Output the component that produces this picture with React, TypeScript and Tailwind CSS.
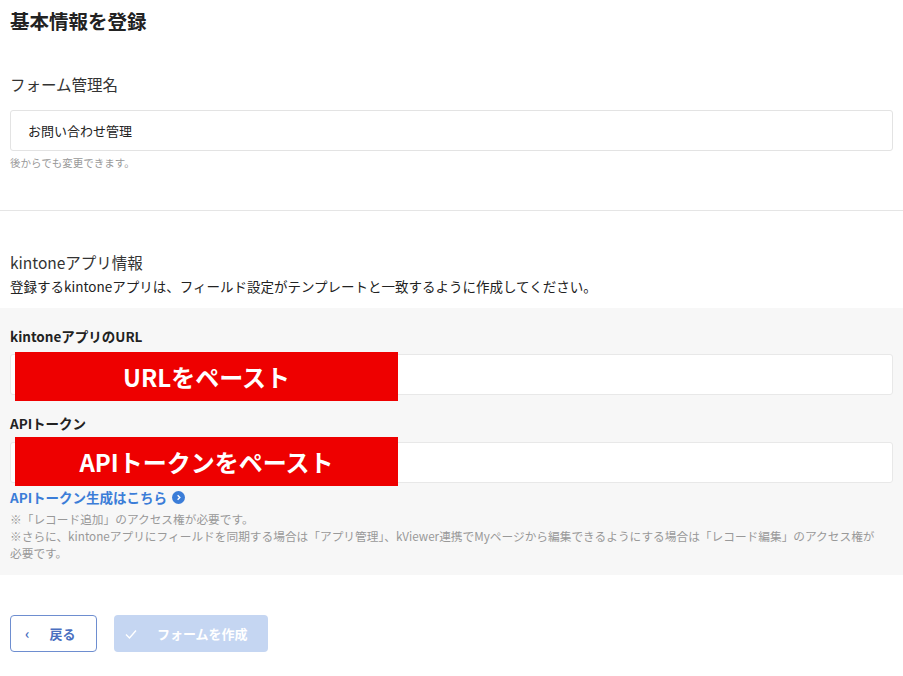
export default function App() {
  const f = { fontFamily: '"Noto Sans CJK JP", "Noto Sans", sans-serif' };
  return (
    <div style={f} className="w-[903px] h-[676px] bg-white text-[#333] overflow-hidden">
      <div className="px-[10px] pt-[7px]">
        <h1 className="text-[19.5px] font-bold leading-[28px] text-[#222]">基本情報を登録</h1>
        <div className="mt-[38px] text-[15.5px] leading-[22px]">フォーム管理名</div>
        <div className="mt-[15px] h-[41px] border border-[#e3e3e3] rounded-[3px] flex items-center px-[17px] text-[13px] text-[#222]">お問い合わせ管理</div>
        <div className="mt-[4px] text-[10.5px] text-[#999] leading-[16px]">後からでも変更できます。</div>
      </div>
      <div className="mt-[39px] border-t border-[#e5e5e5]" />
      <div className="px-[10px] pt-[40px]">
        <div className="text-[15.5px] leading-[22px]">kintoneアプリ情報</div>
        <div className="mt-[3px] text-[13.5px] leading-[20px] text-[#222]">登録するkintoneアプリは、フィールド設定がテンプレートと一致するように作成してください。</div>
      </div>
      <div className="mt-[12px] bg-[#f7f7f7] px-[10px] pt-[18px] pb-[14px]">
        <div className="text-[13.5px] font-bold leading-[20px] text-[#222]">kintoneアプリのURL</div>
        <div className="relative mt-[8px] h-[41px] bg-white border border-[#e8e8e8] rounded-[3px]">
          <div className="absolute left-[4px] top-[-3px] w-[383px] h-[49px] bg-[#ee0000] flex items-center justify-center text-white text-[24px] font-bold">URLをペースト</div>
        </div>
        <div className="mt-[18px] text-[13.5px] font-bold leading-[20px] text-[#222]">APIトークン</div>
        <div className="relative mt-[9px] h-[41px] bg-white border border-[#e8e8e8] rounded-[3px]">
          <div className="absolute left-[4px] top-[-6px] w-[383px] h-[49px] bg-[#ee0000] flex items-center justify-center text-white text-[24px] font-bold">APIトークンをペースト</div>
        </div>
        <div className="mt-[4px] flex items-center gap-[5px] text-[13.5px] font-bold text-[#3b7dd8] leading-[20px]">
          APIトークン生成はこちら
          <span className="w-[13px] h-[13px] rounded-full bg-[#3b7dd8] flex items-center justify-center">
            <svg width="7" height="7" viewBox="0 0 8 8"><path d="M3 1.5 L5.5 4 L3 6.5" stroke="white" strokeWidth="1.6" fill="none" /></svg>
          </span>
        </div>
        <div className="mt-[3px] text-[11.7px] leading-[17px] text-[#999]">
          <div>※「レコード追加」のアクセス権が必要です。</div>
          <div>※さらに、kintoneアプリにフィールドを同期する場合は「アプリ管理」、kViewer連携でMyページから編集できるようにする場合は「レコード編集」のアクセス権が</div>
          <div>必要です。</div>
        </div>
      </div>
      <div className="px-[10px] mt-[40px] flex gap-[17px]">
        <button className="w-[87px] h-[37px] border border-[#6e8ed0] rounded-[4px] flex items-center px-[14px] text-[13px] font-bold text-[#4a6fc0]">
          <span className="text-[14px]">‹</span><span className="ml-[20px]">戻る</span>
        </button>
        <button className="w-[154px] h-[37px] bg-[#c5d6f2] rounded-[4px] flex items-center px-[11px] text-[13px] font-bold text-white">
          <svg width="12" height="12" viewBox="0 0 12 12"><path d="M1 6.5 L4.5 10 L11 2.5" stroke="white" strokeWidth="1.4" fill="none" /></svg>
          <span className="ml-[20px]">フォームを作成</span>
        </button>
      </div>
    </div>
  );
}
